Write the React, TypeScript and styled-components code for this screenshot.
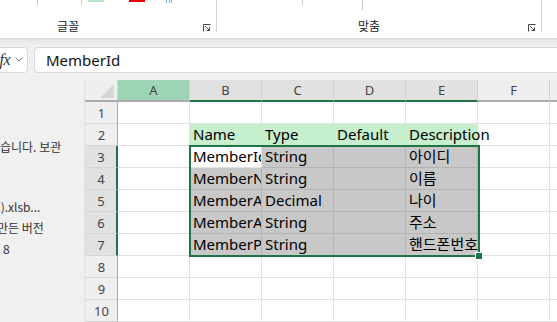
import React from 'react';
import styled, { createGlobalStyle } from 'styled-components';

const GlobalStyle = createGlobalStyle`
  html, body {
    margin: 0;
    padding: 0;
    background: #f0f0f0;
  }
  body {
    font-family: "Noto Sans", "Noto Sans CJK KR", sans-serif;
  }
`;

const Window = styled.div`
  width: 557px;
  height: 322px;
  overflow: hidden;
  display: flex;
  flex-direction: column;
  background: #f0f0f0;
`;

/* ---------- ribbon ---------- */

const Ribbon = styled.div`
  height: 38px;
  flex: none;
  display: flex;
  background: #fff;
`;

const Group = styled.div<{ $width: number }>`
  width: ${(p) => p.$width}px;
  flex: none;
  display: flex;
  flex-direction: column;
  justify-content: space-between;
  border-right: 1px solid #d6d6d6;
  height: 32px;
`;

const Stubs = styled.div`
  display: flex;
  align-items: flex-start;
  height: 6px;
`;

const Stub = styled.span<{ $at: number; $h?: number; $color?: string; $w?: number }>`
  margin-left: ${(p) => p.$at}px;
  width: ${(p) => p.$w ?? 1}px;
  height: ${(p) => p.$h ?? 5}px;
  background: ${(p) => p.$color ?? '#c8c8c8'};
  flex: none;
`;

const GroupFooter = styled.div<{ $labelAt: number }>`
  display: flex;
  align-items: flex-end;
  padding-left: ${(p) => p.$labelAt}px;
  padding-right: 4px;
  height: 13px;
`;

const GroupLabel = styled.span`
  font-family: "Noto Sans CJK KR", sans-serif;
  font-size: 12px;
  line-height: 13px;
  color: #262626;
  flex: 1;
`;

const Launcher = () => (
  <svg width="8" height="8" viewBox="0 0 8 8" style={{ marginRight: 1 }}>
    <path d="M0.5 7.5V0.5H7.5" stroke="#444" fill="none" strokeWidth="1" />
    <path d="M2 2L6.5 6.5M6.5 3.5V6.5H3.5" stroke="#444" fill="none" strokeWidth="1" />
  </svg>
);

/* ---------- formula bar ---------- */

const FormulaBar = styled.div`
  height: 42px;
  flex: none;
  display: flex;
  align-items: center;
  gap: 6px;
  padding-top: 1px;
  box-sizing: border-box;
  background: linear-gradient(#d9d9d9 0px, #e9e9e9 3px, #f0f0f0 8px);
`;

const FxBox = styled.div`
  width: 36px;
  margin-left: -8px;
  height: 26px;
  box-sizing: border-box;
  display: flex;
  align-items: center;
  justify-content: flex-end;
  gap: 5px;
  padding-right: 4px;
  background: #fff;
  border: 1px solid #d8d8d8;
  border-radius: 4px;
`;

const Fx = styled.span`
  font-family: "Liberation Serif", serif;
  font-style: italic;
  font-size: 16px;
  color: #333;
  letter-spacing: -0.5px;
`;

const FormulaInput = styled.div`
  flex: 1;
  height: 26px;
  box-sizing: border-box;
  margin-right: -8px;
  display: flex;
  align-items: center;
  padding-left: 11px;
  background: #fff;
  border: 1px solid #d8d8d8;
  border-radius: 4px;
  font-size: 15px;
  color: #111;
`;

/* ---------- body ---------- */

const Body = styled.div`
  flex: 1;
  display: flex;
  min-height: 0;
`;

const SidePanel = styled.div`
  width: 84px;
  flex: none;
  border-right: 1px solid #e2e2e2;
  overflow: hidden;
  padding-top: 56px;
  font-family: "Noto Sans CJK KR", sans-serif;
  font-size: 12px;
  color: #333;
`;

const PanelLine = styled.div<{ $gap?: number; $shift?: number }>`
  white-space: nowrap;
  line-height: 21px;
  margin-top: ${(p) => p.$gap ?? 0}px;
  margin-left: ${(p) => p.$shift ?? 0}px;
`;

const SheetWrap = styled.div`
  flex: 1;
  position: relative;
  overflow: hidden;
  background: #fff;
`;

const Sheet = styled.div`
  display: grid;
  grid-template-columns: 33px repeat(6, 72px) 40px;
  grid-auto-rows: 22px;
`;

const Corner = styled.div`
  background: #efefef;
  border-right: 1px solid #d0d0d0;
  border-bottom: 2px solid #ababab;
  box-sizing: border-box;
  display: flex;
  align-items: flex-end;
  justify-content: flex-end;
  padding: 0 3px 2px 0;
`;

type HeadState = 'picked' | 'sel' | 'none';

const ColHead = styled.div<{ $state: HeadState }>`
  box-sizing: border-box;
  display: flex;
  align-items: center;
  justify-content: center;
  font-size: 13px;
  color: #444;
  background: ${(p) =>
    p.$state === 'picked' ? '#9fd5b7' : p.$state === 'sel' ? '#e1e1e1' : '#efefef'};
  border-right: 1px solid #d0d0d0;
  border-bottom: 2px solid ${(p) => (p.$state === 'sel' ? '#217346' : '#ababab')};
`;

const RowHead = styled.div<{ $sel: boolean }>`
  box-sizing: border-box;
  display: flex;
  align-items: center;
  justify-content: center;
  font-size: 13px;
  color: #444;
  padding-left: 1px;
  background: ${(p) => (p.$sel ? '#e1e1e1' : '#efefef')};
  border-bottom: 1px solid #d6d6d6;
  border-right: ${(p) => (p.$sel ? '2px solid #217346' : '1px solid #ababab')};
`;

type Fill = 'none' | 'head' | 'sel' | 'active';

const Cell = styled.div<{ $fill: Fill; $clip: boolean }>`
  box-sizing: border-box;
  display: flex;
  align-items: flex-end;
  padding: 0 0 1px 3px;
  font-size: 15px;
  line-height: 20px;
  color: #000;
  white-space: nowrap;
  overflow: ${(p) => (p.$clip ? 'hidden' : 'visible')};
  text-overflow: clip;
  position: relative;
  z-index: ${(p) => (p.$clip ? 0 : 1)};
  background: ${(p) =>
    p.$fill === 'head'
      ? '#c6efce'
      : p.$fill === 'sel'
      ? '#c8c8c8'
      : p.$fill === 'active'
      ? '#fff'
      : 'transparent'};
  border-right: 1px solid
    ${(p) => (p.$fill === 'head' ? '#c6efce' : p.$fill === 'sel' ? '#b4b4b4' : '#e1e1e1')};
  border-bottom: 1px solid
    ${(p) => (p.$fill === 'head' ? '#c6efce' : p.$fill === 'sel' ? '#b4b4b4' : '#e1e1e1')};
`;

const Selection = styled.div`
  position: absolute;
  left: 104px;
  top: 65px;
  width: 291px;
  height: 112px;
  box-sizing: border-box;
  border: 2px solid #217346;
  pointer-events: none;
  z-index: 2;
`;

const FillHandle = styled.span`
  position: absolute;
  right: -5px;
  bottom: -5px;
  width: 6px;
  height: 6px;
  background: #217346;
  border: 1px solid #fff;
`;

const columns = ['A', 'B', 'C', 'D', 'E', 'F', ''];

const data: Record<number, string[]> = {
  2: ['Name', 'Type', 'Default', 'Description'],
  3: ['MemberId', 'String', '', '아이디'],
  4: ['MemberName', 'String', '', '이름'],
  5: ['MemberAge', 'Decimal', '', '나이'],
  6: ['MemberAddress', 'String', '', '주소'],
  7: ['MemberPhone', 'String', '', '핸드폰번호'],
};

const isSelRow = (r: number) => r >= 3 && r <= 7;

const fillFor = (r: number, c: number): Fill => {
  if (c < 1 || c > 4) return 'none';
  if (r === 2) return 'head';
  if (r === 3 && c === 1) return 'active';
  if (isSelRow(r)) return 'sel';
  return 'none';
};

const App: React.FC = () => {
  const rows = Array.from({ length: 10 }, (_, i) => i + 1);

  return (
    <Window>
      <GlobalStyle />
      <Ribbon>
        <Group $width={216}>
          <Stubs>
            <Stub $at={37} />
            <Stub $at={43} />
            <Stub $at={6} $w={16} $h={2} $color="#b7e4c4" />
            <Stub $at={25} $w={16} $h={2} $color="#e60000" />
            <Stub $at={21} $h={3} $color="#6fb2e6" />
            <Stub $at={2} $h={3} $color="#6fb2e6" />
            <Stub $at={1} $h={3} $color="#6fb2e6" />
          </Stubs>
          <GroupFooter $labelAt={57}>
            <GroupLabel>글꼴</GroupLabel>
            <Launcher />
          </GroupFooter>
        </Group>
        <Group $width={324}>
          <Stubs>
            <Stub $at={85} />
            <Stub $at={59} $h={10} />
          </Stubs>
          <GroupFooter $labelAt={141}>
            <GroupLabel>맞춤</GroupLabel>
            <Launcher />
          </GroupFooter>
        </Group>
      </Ribbon>

      <FormulaBar>
        <FxBox>
          <Fx>fx</Fx>
          <svg width="8" height="5" viewBox="0 0 8 5">
            <path d="M0.5 0.5L4 4L7.5 0.5" stroke="#777" fill="none" strokeWidth="1" />
          </svg>
        </FxBox>
        <FormulaInput>MemberId</FormulaInput>
      </FormulaBar>

      <Body>
        <SidePanel>
          <PanelLine>습니다. 보관</PanelLine>
          <PanelLine $gap={39} $shift={-6}>1).xlsb...</PanelLine>
          <PanelLine $shift={-3}>만든 버전</PanelLine>
          <PanelLine $shift={3}>8</PanelLine>
        </SidePanel>

        <SheetWrap>
          <Sheet>
            <Corner>
              <svg width="14" height="14" viewBox="0 0 14 14">
                <path d="M14 0V14H0Z" fill="#d6d6d6" />
              </svg>
            </Corner>
            {columns.map((c, i) => (
              <ColHead
                key={`h${i}`}
                $state={i === 0 ? 'picked' : i >= 1 && i <= 4 ? 'sel' : 'none'}
              >
                {c}
              </ColHead>
            ))}
            {rows.map((r) => (
              <React.Fragment key={r}>
                <RowHead $sel={isSelRow(r)}>{r}</RowHead>
                {columns.map((_, c) => {
                  const text = c >= 1 && c <= 4 ? data[r]?.[c - 1] ?? '' : '';
                  return (
                    <Cell key={c} $fill={fillFor(r, c)} $clip={c !== 4}>
                      {text}
                    </Cell>
                  );
                })}
              </React.Fragment>
            ))}
          </Sheet>
          <Selection>
            <FillHandle />
          </Selection>
        </SheetWrap>
      </Body>
    </Window>
  );
};

export default App;
